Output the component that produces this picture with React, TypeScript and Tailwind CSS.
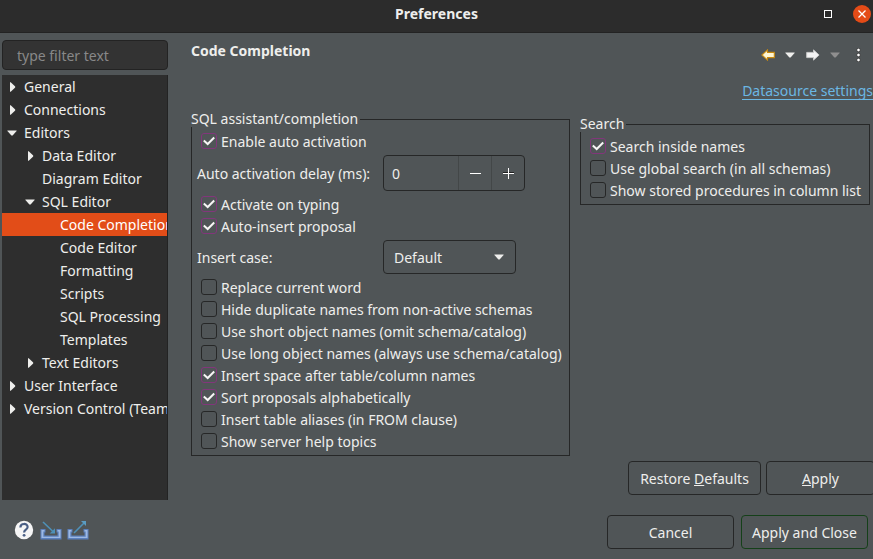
import { useState } from "react";

type Node = { label: string; depth: number; state?: "open" | "closed"; selected?: boolean };

const tree: Node[] = [
  { label: "General", depth: 0, state: "closed" },
  { label: "Connections", depth: 0, state: "closed" },
  { label: "Editors", depth: 0, state: "open" },
  { label: "Data Editor", depth: 1, state: "closed" },
  { label: "Diagram Editor", depth: 1 },
  { label: "SQL Editor", depth: 1, state: "open" },
  { label: "Code Completion", depth: 2, selected: true },
  { label: "Code Editor", depth: 2 },
  { label: "Formatting", depth: 2 },
  { label: "Scripts", depth: 2 },
  { label: "SQL Processing", depth: 2 },
  { label: "Templates", depth: 2 },
  { label: "Text Editors", depth: 1, state: "closed" },
  { label: "User Interface", depth: 0, state: "closed" },
  { label: "Version Control (Team)", depth: 0, state: "closed" },
];

const indents = ["pl-1", "pl-[22px]", "pl-10"];

function Check({ label, checked = false }: { label: string; checked?: boolean }) {
  const [on, setOn] = useState(checked);
  return (
    <label className="flex h-[22px] items-center gap-1 whitespace-nowrap pl-1">
      <span className="grid size-4 shrink-0">
        <input
          type="checkbox"
          checked={on}
          onChange={() => setOn(!on)}
          className="col-start-1 row-start-1 size-4 appearance-none rounded-[3px] border border-[#262727] checked:border-[#82367b]"
        />
        {on && (
          <svg viewBox="0 0 16 16" className="pointer-events-none col-start-1 row-start-1 size-4" aria-hidden="true">
            <path d="M2.800 7.400 6.700 11 13.200 4.500" fill="none" stroke="#f6f5f5" strokeWidth="2" />
          </svg>
        )}
      </span>
      {label}
    </label>
  );
}

function Caret({ className = "" }: { className?: string }) {
  return (
    <svg viewBox="0 0 10 6" className={`h-[6px] w-[10px] ${className}`} aria-hidden="true">
      <path d="M.4.5h9.200v.6L5.600 5.400H4.400L.4 1.100z" fill="currentColor" />
    </svg>
  );
}

function Group({ title, children }: { title: string; children: React.ReactNode }) {
  return (
    <fieldset className="min-w-0 border border-[#262727] px-[5px] pb-[3px]">
      <legend className="-ml-[6px] mb-[3px] pr-0.5 leading-4">{title}</legend>
      {children}
    </fieldset>
  );
}

function Tray() {
  return (
    <>
      <path d="M.5 9h5v3.500H4.500v3h13v-3H16.500V9h5v10.500H.5z" fill="#5b80bd" />
      <path d="M1.500 10h3v1.500H3.300v5.200h15.400v-5.200H17.500V10h3v8h-19z" fill="#9db8e2" />
    </>
  );
}

const button = "h-[34px] rounded-[4px] border text-center whitespace-nowrap";

export default function App() {
  const [delay, setDelay] = useState(0);
  return (
    <div className="flex min-h-screen flex-col overflow-hidden bg-[#505557] font-['Noto_Sans','Open_Sans',sans-serif] text-[14px] text-[#eeeeec]">
      <header className="grid h-[33px] grid-cols-[1fr_auto_1fr] items-center border-b border-[#232323] bg-[#2c2c2c]">
        <h1 className="col-start-2 pb-1 font-bold leading-5">Preferences</h1>
        <div className="flex items-center justify-end gap-[21px] pb-1 pr-0.5">
          <button aria-label="Maximize" className="size-2 border border-white" />
          <button aria-label="Close" className="grid size-[18px] place-items-center rounded-full bg-[#e44b17]">
            <svg viewBox="0 0 8 8" className="size-2" aria-hidden="true">
              <path d="M.5.5l7 7M7.500.5l-7 7" stroke="#fff" strokeWidth="1.300" />
            </svg>
          </button>
        </div>
      </header>

      <div className="flex flex-1">
        <aside className="flex w-[168px] shrink-0 flex-col gap-[5px] pl-0.5 pt-[7px]">
          <input
            type="text"
            aria-label="Filter preferences"
            placeholder="type filter text"
            className="h-[30px] w-full rounded-[4px] border border-[#232323] bg-[#333333] px-3.5 placeholder:text-[#888888]"
          />
          <ul className="flex-1 overflow-hidden border-r border-[#232323] bg-[#2e2e2e]">
            {tree.map((n) => (
              <li
                key={n.label}
                className={`flex h-[23px] items-center gap-0.5 whitespace-nowrap ${indents[n.depth]} ${n.selected ? "bg-[#e24d18] text-white" : ""}`}
              >
                <span className="grid w-4 shrink-0 place-items-start">
                  {n.state === "open" && <Caret className="ml-px" />}
                  {n.state === "closed" && (
                    <svg viewBox="0 0 6 10" className="ml-1 h-[10px] w-[6px]" aria-hidden="true">
                      <path d="M0 .3h.7L5.200 4.500v1L.7 9.700H0z" fill="currentColor" />
                    </svg>
                  )}
                </span>
                {n.label}
              </li>
            ))}
          </ul>
        </aside>

        <main className="flex min-w-0 flex-1 flex-col pb-[5px] pl-[23px]">
          <div className="flex justify-between pt-2">
            <h2 className="font-bold leading-5">Code Completion</h2>
            <div className="flex h-7 items-center pr-3">
              <button aria-label="Back">
                <svg viewBox="0 0 14 12" className="h-3 w-3.5" aria-hidden="true">
                  <path d="M6.500.9.9 6l5.600 5.100V8.600h6.800V3.400H6.500z" fill="#fff6d2" stroke="#c98a10" strokeWidth="1.100" />
                </svg>
              </button>
              <button aria-label="Back history" className="ml-2.5">
                <Caret />
              </button>
              <button aria-label="Forward" className="ml-[11px]">
                <svg viewBox="0 0 14 12" className="h-3 w-3.5" aria-hidden="true">
                  <path d="M7.500.9 13.100 6l-5.600 5.100V8.600H.7V3.400h6.800z" fill="#f4f4f4" stroke="#c9c9c9" />
                </svg>
              </button>
              <button aria-label="Forward history" className="ml-2.5 text-[#8f8f8f]">
                <Caret />
              </button>
              <button aria-label="View menu" className="ml-4">
                <svg viewBox="0 0 5 14" className="h-3.5 w-[5px]" aria-hidden="true">
                  <g fill="#fff" stroke="#333" strokeWidth=".8">
                    <circle cx="2.500" cy="2" r="1.800" />
                    <circle cx="2.500" cy="7" r="1.800" />
                    <circle cx="2.500" cy="12" r="1.800" />
                  </g>
                </svg>
              </button>
            </div>
          </div>

          <div className="flex justify-end pt-[13px]">
            <a href="#datasource" className="border-b border-[#6bb7e3] leading-[17px] whitespace-nowrap text-[#6bb7e3]">
              Datasource settings
            </a>
          </div>

          <div className="flex items-start gap-2.5 pr-[3px] pt-[11px]">
            <div className="min-w-0 flex-[379]">
              <Group title="SQL assistant/completion">
                <Check label="Enable auto activation" checked />
                <div className="mb-0.5 mt-[3px] flex items-center">
                  <label htmlFor="delay" className="w-[186px] shrink-0 whitespace-nowrap">
                    Auto activation delay (ms):
                  </label>
                  <div className="flex h-9 w-[142px] rounded-[4px] border border-[#262727]">
                    <input
                      id="delay"
                      type="text"
                      value={delay}
                      onChange={(e) => setDelay(Number(e.target.value) || 0)}
                      className="w-[74px] bg-transparent pl-2"
                    />
                    <button aria-label="Decrease" onClick={() => setDelay(Math.max(0, delay - 1))} className="grid flex-1 place-items-center border-l border-[#434748]">
                      <svg viewBox="0 0 11 11" className="size-[11px]" aria-hidden="true">
                        <path d="M0 5.500h11" stroke="#fff" />
                      </svg>
                    </button>
                    <button aria-label="Increase" onClick={() => setDelay(delay + 1)} className="grid flex-1 place-items-center border-l border-[#434748]">
                      <svg viewBox="0 0 11 11" className="size-[11px]" aria-hidden="true">
                        <path d="M0 4.500h11" stroke="#1f1f1f" />
                        <path d="M0 5.500h11M5.500 0v11" stroke="#fff" />
                      </svg>
                    </button>
                  </div>
                </div>
                <Check label="Activate on typing" checked />
                <Check label="Auto-insert proposal" checked />
                <div className="mb-0.5 mt-[3px] flex items-center">
                  <label htmlFor="case" className="w-[186px] shrink-0">
                    Insert case:
                  </label>
                  <div className="grid w-[133px] items-center">
                    <select id="case" className="col-start-1 row-start-1 h-[34px] appearance-none rounded-[4px] border border-[#262727] px-2.5">
                      <option>Default</option>
                      <option>Upper case</option>
                      <option>Lower case</option>
                    </select>
                    <Caret className="pointer-events-none col-start-1 row-start-1 mr-3 justify-self-end" />
                  </div>
                </div>
                <Check label="Replace current word" />
                <Check label="Hide duplicate names from non-active schemas" />
                <Check label="Use short object names (omit schema/catalog)" />
                <Check label="Use long object names (always use schema/catalog)" />
                <Check label="Insert space after table/column names" checked />
                <Check label="Sort proposals alphabetically" checked />
                <Check label="Insert table aliases (in FROM clause)" />
                <Check label="Show server help topics" />
              </Group>
            </div>
            <div className="min-w-0 flex-[290] pt-[5px]">
              <Group title="Search">
                <Check label="Search inside names" checked />
                <Check label="Use global search (in all schemas)" />
                <Check label="Show stored procedures in column list" />
              </Group>
            </div>
          </div>

          <div className="-mr-0.5 mt-auto flex justify-end gap-[5px]">
            <button className={`${button} w-[133px] border-[#262727]`}>
              Restore <u>D</u>efaults
            </button>
            <button className={`${button} w-[109px] border-[#262727]`}>
              <u>A</u>pply
            </button>
          </div>
        </main>
      </div>

      <footer className="flex items-center justify-between pb-2.5 pl-3.5 pr-[5px] pt-[15px]">
        <div className="flex items-center gap-1.5 pb-1">
          <button aria-label="Help">
            <svg viewBox="0 0 20 20" className="size-5" aria-hidden="true">
              <circle cx="10" cy="10" r="9.200" fill="#f5f5f5" />
              <path d="M6.400 7.400c0-4.600 7.200-4.400 7.200-.4 0 2.800-3.500 2.600-3.500 5.400" fill="none" stroke="#4a5f85" strokeWidth="2.200" />
              <circle cx="10.100" cy="15.300" r="1.400" fill="#4a5f85" />
            </svg>
          </button>
          <button aria-label="Import preferences">
            <svg viewBox="0 0 22 20" className="h-5 w-[22px]" aria-hidden="true">
              <Tray />
              <path d="M3 2l9.500 9" stroke="#4e91b8" strokeWidth="1.600" />
              <path d="M15 13.500V8.200L9.700 13.500z" fill="#4e91b8" />
            </svg>
          </button>
          <button aria-label="Export preferences" className="-ml-px">
            <svg viewBox="0 0 22 20" className="h-5 w-[22px]" aria-hidden="true">
              <Tray />
              <path d="M7 13 17 3" stroke="#4e91b8" strokeWidth="1.600" />
              <path d="M19 1v5L14 1z" fill="#5a9cc2" />
            </svg>
          </button>
        </div>
        <div className="flex gap-[7px]">
          <button className={`${button} w-[127px] border-[#262727]`}>Cancel</button>
          <button className={`${button} w-[127px] border-[#154019]`}>Apply and Close</button>
        </div>
      </footer>
    </div>
  );
}
